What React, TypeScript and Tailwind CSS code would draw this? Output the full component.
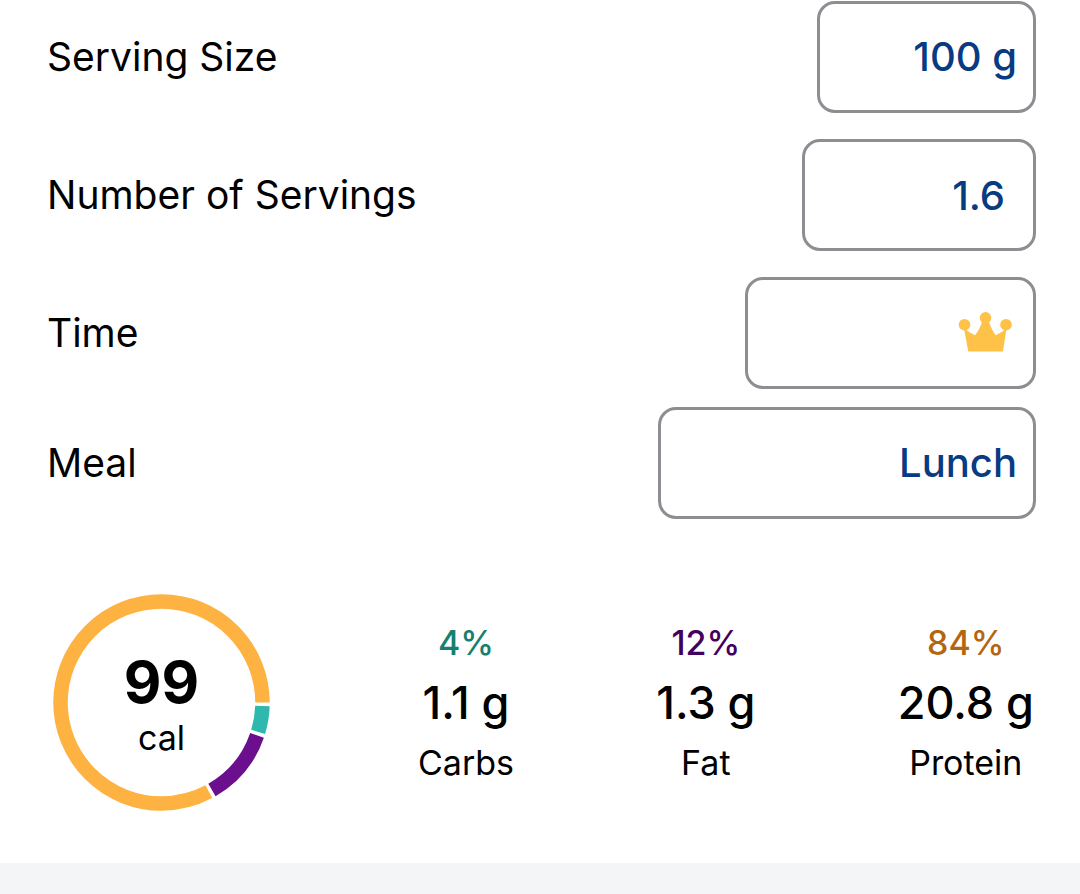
import { useState } from 'react';
import type { ReactNode } from 'react';

const segments = [
  { name: 'Carbs', color: '#2fb8ae', start: 2, end: 17 },
  { name: 'Fat', color: '#6b0f8e', start: 19, end: 60 },
  { name: 'Protein', color: '#fdb241', start: 62, end: 360 },
];

const macros = [
  { label: 'Carbs', percent: '4%', amount: '1.1 g', color: 'text-[#15806f]' },
  { label: 'Fat', percent: '12%', amount: '1.3 g', color: 'text-[#430061]' },
  { label: 'Protein', percent: '84%', amount: '20.8 g', color: 'text-[#b5650f]' },
];

const field =
  'h-28 appearance-none rounded-[18px] border-3 border-[#8e8d92] bg-white text-right text-[40px] font-medium text-[#073b82] outline-none';

function Row({ id, label, children }: { id: string; label: string; children: ReactNode }) {
  return (
    <div className="flex items-center justify-between">
      <label htmlFor={id}>{label}</label>
      {children}
    </div>
  );
}

function Crown() {
  return (
    <svg viewBox="0 0 54 41" className="h-[41px] w-[54px]" fill="#fdc247" aria-hidden="true">
      <circle cx="6.5" cy="13.7" r="5.8" />
      <circle cx="27.5" cy="6.8" r="5.8" />
      <circle cx="48" cy="13.7" r="5.8" />
      <path d="M6 17.5 Q12 22 17 24.3 Q21 19.5 24 11 H31 Q34 19.5 37.7 24.3 Q43 22 48.5 17.5 L45 40.5 H10.3 Z" />
    </svg>
  );
}

function CalorieRing() {
  return (
    <div className="relative flex size-[217px] shrink-0 flex-col items-center justify-center">
      <svg viewBox="0 0 217 217" className="absolute inset-0 size-full" fill="none" aria-hidden="true">
        {segments.map((s) => (
          <circle
            key={s.name}
            cx="108.5"
            cy="108.5"
            r="101"
            pathLength="360"
            stroke={s.color}
            strokeWidth="14.5"
            strokeDasharray={`${s.end - s.start} 360`}
            strokeDashoffset={-s.start}
          />
        ))}
      </svg>
      <span className="text-[58px] leading-[70px] font-bold">99</span>
      <span className="text-[34px] leading-[42px]">cal</span>
    </div>
  );
}

export default function App() {
  const [servings, setServings] = useState('1.6');

  return (
    <main className="flex min-h-screen flex-col bg-white font-['Inter',sans-serif] text-[39px] text-black">
      {/* Entry fields */}
      <form className="flex flex-col pt-px pr-11 pl-[47px]">
        <Row id="size" label="Serving Size">
          <select id="size" className={`${field} w-[219px] pr-4 [text-align-last:right]`}>
            <option>100 g</option>
          </select>
        </Row>
        <div className="mt-[26px]">
          <Row id="servings" label="Number of Servings">
            <input
              id="servings"
              inputMode="decimal"
              value={servings}
              onChange={(e) => setServings(e.target.value)}
              className={`${field} w-[234px] pr-7`}
            />
          </Row>
        </div>
        <div className="mt-[26px]">
          <Row id="time" label="Time">
            <button
              id="time"
              type="button"
              aria-label="Time"
              className={`${field} flex w-[291px] items-center justify-end pr-[21px] pb-1`}
            >
              <Crown />
            </button>
          </Row>
        </div>
        <div className="mt-[18px]">
          <Row id="meal" label="Meal">
            <select id="meal" className={`${field} w-[378px] pr-4 [text-align-last:right]`}>
              <option>Lunch</option>
            </select>
          </Row>
        </div>
      </form>

      {/* Calories and macros */}
      <section className="mt-[75px] mb-[52px] flex items-center gap-[148px] pr-[46px] pl-[53px]">
        <CalorieRing />
        <div className="flex flex-1 justify-between">
          {macros.map((m) => (
            <div key={m.label} className="flex flex-col items-center leading-[60px]">
              <span className={`text-[34px] font-medium ${m.color}`}>{m.percent}</span>
              <span className="text-[45px] font-medium">{m.amount}</span>
              <span className="text-[34px]">{m.label}</span>
            </div>
          ))}
        </div>
      </section>

      <div className="min-h-8 flex-1 bg-[#f4f5f7]" />
    </main>
  );
}
